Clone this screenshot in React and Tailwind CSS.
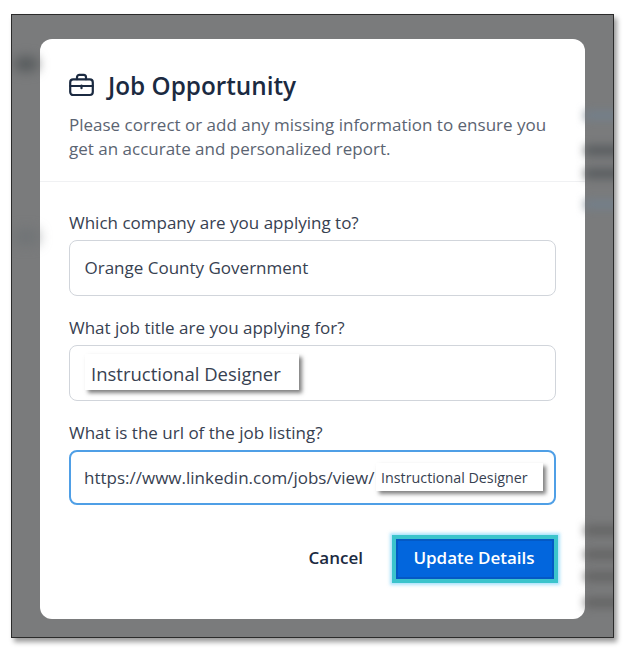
import React from "react";

function Field({ label, children, className = "", focused = false }) {
  return (
    <div className={className}>
      <label className="block text-[17px] leading-[24px] text-[#374151]">{label}</label>
      <div
        className={
          "relative mt-[5px] flex items-center rounded-[8px] bg-white text-[17px] text-[#374151] " +
          (focused ? "h-[55px] border-2 border-[#4f9fe6] px-[13px]" : "h-[56px] border border-[#d1d5db] px-[14.5px]")
        }
      >
        {children}
      </div>
    </div>
  );
}

function Smudge({ className }) {
  return <div className={"h-[9px] w-[40px] shrink-0 " + className} />;
}

export default function App() {
  return (
    <div className="h-[650px] w-[625px] overflow-hidden bg-white pl-[11px] pt-[14px] font-['Open_Sans','Noto_Sans',sans-serif]">
      <div className="flex h-[624px] w-[603px] overflow-hidden border border-[#2b2b2b] bg-[#7a7b7c] shadow-[3px_4px_5px_rgba(0,0,0,0.4)]">
        <div className="flex w-[28px] shrink-0 flex-col pt-[42px] pl-[2px]">
          <div className="h-[14px] w-[24px] rounded-full bg-[#565a5c] blur-[6px]" />
          <div className="mt-[160px] h-[12px] w-[24px] rounded-full bg-[#6c7174] blur-[7px]" />
        </div>

        <div className="mt-[24px] h-[580px] w-[545px] shrink-0 rounded-[12px] bg-white">
          <div className="h-[143px] border-b border-[#f0f1f3] px-[29px] pt-[30px]">
            <div className="flex items-center gap-[14px]">
              <svg className="-mt-[3px]" width="25" height="24" viewBox="0 0 25 24" fill="none" stroke="#1b2a41" strokeWidth="2.2" strokeLinecap="round" strokeLinejoin="round">
                <rect x="1.2" y="6.4" width="22.6" height="15.6" rx="3" />
                <path d="M8 6.2V4.2a2.4 2.4 0 0 1 2.4-2.4h4.2A2.4 2.4 0 0 1 17 4.2v2" />
                <path d="M1.4 13h22.2" />
                <path d="M12.5 12.6v2.6" />
              </svg>
              <h1 className="text-[24.3px] font-semibold leading-[34px] text-[#1b2a41]">Job Opportunity</h1>
            </div>
            <p className="mt-[10px] text-[17px] leading-[24px] text-[#5b6472]">
              Please correct or add any missing information to ensure you get an accurate and personalized report.
            </p>
          </div>

          <div className="px-[29px] pt-[29px]">
            <Field label="Which company are you applying to?">Orange County Government</Field>

            <Field label="What job title are you applying for?" className="mt-[20px]">
              <span className="absolute left-[15px] top-[8px] flex h-[36px] w-[214px] items-center bg-white pl-[6px] pt-[3px] text-[18.5px] shadow-[3px_3px_4px_rgba(0,0,0,0.5)]">
                Instructional Designer
              </span>
            </Field>

            <Field label="What is the url of the job listing?" className="mt-[20px]" focused>
              https://www.linkedin.com/jobs/view/
              <span className="absolute left-[305px] top-[11px] flex h-[28px] w-[167px] items-center bg-white pl-[5px] pt-[2px] text-[14.3px] shadow-[3px_3px_4px_rgba(0,0,0,0.5)]">
                Instructional Designer
              </span>
            </Field>

            <div className="mr-[-2px] mt-[30px] flex items-center justify-end gap-[29px]">
              <button className="pb-[3px] text-[17px] font-semibold text-[#1b2a41]">Cancel</button>
              <button className="h-[48px] w-[166px] border-[4px] border-[#3cc4cc] bg-[#0266dd] pb-[3px] pr-[2px] text-[17px] font-semibold text-white shadow-[0_0_3px_2px_rgba(90,200,250,0.5),inset_0_0_0_2px_#0459c4]">
                Update Details
              </button>
            </div>
          </div>
        </div>

        <div className="flex w-[28px] shrink-0 flex-col pt-[96px]">
          <Smudge className="bg-[#73808c] blur-[5px]" />
          <Smudge className="mt-[26px] bg-[#565a5d] blur-[5px]" />
          <Smudge className="mt-[14px] bg-[#565a5d] blur-[5px]" />
          <Smudge className="mt-[22px] bg-[#73808c] blur-[5px]" />
          <Smudge className="mt-[317px] bg-[#626262] blur-[5px]" />
          <Smudge className="mt-[15px] bg-[#626262] blur-[5px]" />
          <Smudge className="mt-[13px] bg-[#626262] blur-[5px]" />
          <Smudge className="mt-[17px] bg-[#626262] blur-[5px]" />
        </div>
      </div>
    </div>
  );
}
